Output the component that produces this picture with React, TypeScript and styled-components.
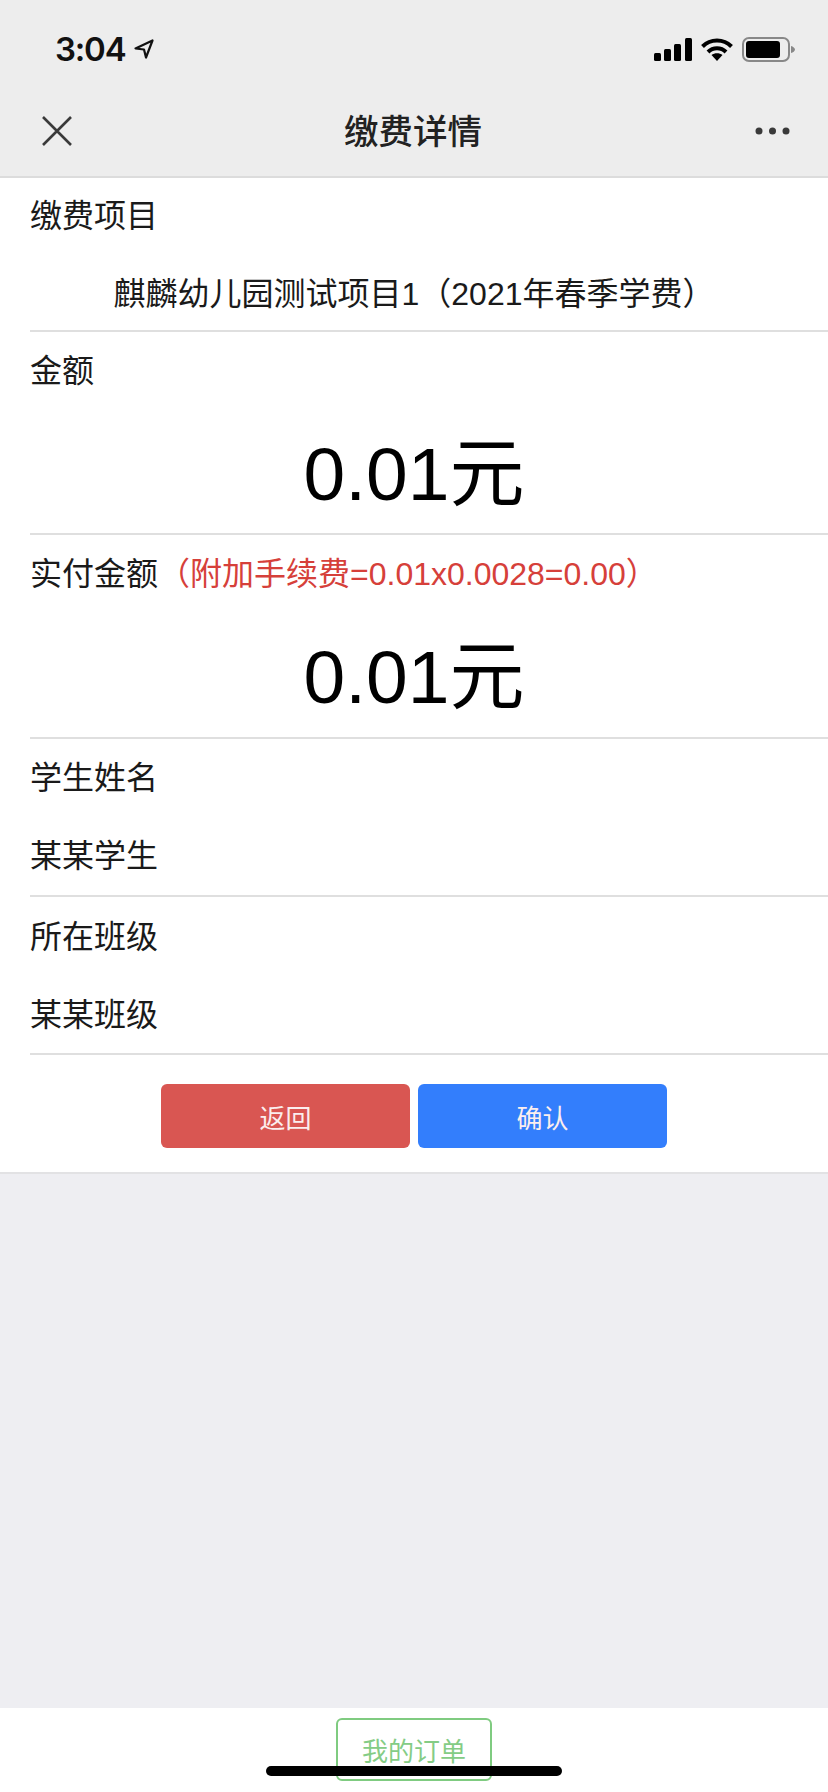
import React from "react";
import styled, { createGlobalStyle } from "styled-components";

const Global = createGlobalStyle`
  html, body { margin: 0; padding: 0; background: #eeeef2; }
  body { font-family: "Liberation Sans", "Noto Sans CJK SC", sans-serif; color: #111; }
`;
const Page = styled.div`
  position: relative; width: 828px; height: 1792px; display: flex; flex-direction: column; overflow: hidden;
`;
const TopBar = styled.header`
  background: #ededed; height: 178px; border-bottom: 2px solid #dcdcdc; box-sizing: border-box;
  display: flex; flex-direction: column; flex-shrink: 0;
`;
const StatusBar = styled.div`
  height: 88px; display: flex; align-items: center; justify-content: space-between;
  padding: 10px 33px 0 55px; box-sizing: border-box;
`;
const TimeGroup = styled.div`display: flex; align-items: center; gap: 9px;`;
const Time = styled.span`
  font-family: Inter, "Liberation Sans", sans-serif; font-size: 33px; font-weight: 600; line-height: 40px;
  letter-spacing: -1.200px; color: #111;
`;
const StatusIcons = styled.div`display: flex; align-items: center; gap: 9px;`;
const NavBar = styled.div`
  flex: 1; display: flex; align-items: center; justify-content: space-between;
  padding: 0 38px 2px 42px;
`;
const Title = styled.h1`
  margin: 2px 0 0; font-size: 34.500px; line-height: 44px; font-weight: 500; color: #222;
  font-family: "Liberation Sans", "Noto Sans CJK SC", sans-serif;
  position: absolute; left: -2px; right: 0; text-align: center; pointer-events: none;
`;
const Card = styled.main`
  background: #fff; border-bottom: 2px solid #e2e2e4; flex-shrink: 0; display: flex; flex-direction: column;
`;
const Line = styled.div<{ $h: number }>`
  height: ${(p) => p.$h}px; display: flex; align-items: center; padding-left: 30px;
  font-size: 32px; color: #1a1a1a; white-space: nowrap;
`;
const Centered = styled.div`
  height: 83px; display: flex; align-items: center; justify-content: center; font-size: 32px; color: #1a1a1a;
  white-space: nowrap; padding-top: 4px; box-sizing: border-box;
`;
const Big = styled.div<{ $h: number }>`
  height: ${(p) => p.$h}px; display: flex; align-items: center; justify-content: center;
  font-size: 75px; line-height: 1; color: #000; padding-top: 11px; box-sizing: border-box;
`;
const Red = styled.span`color: #d6403a; font-size: 32px;`;
const Divider = styled.hr`
  margin: 0 0 0 30px; border: 0; height: 2px; background: #dfdfdf;
`;
const Buttons = styled.div`
  display: flex; justify-content: center; gap: 8px; padding: 29px 0 24px;
`;
const Btn = styled.button<{ $bg: string }>`
  width: 249px; height: 64px; border: 0; border-radius: 6px; background: ${(p) => p.$bg};
  color: #fbeeee; font-size: 26px; font-family: inherit; padding: 0;
`;
const Filler = styled.div`flex: 1; background: #eeeef2;`;
const Footer = styled.footer`
  height: 84px; background: #fff; display: flex; justify-content: center; padding-top: 10px; box-sizing: border-box; flex-shrink: 0;
`;
const OrderBtn = styled.button`
  width: 156px; height: 63px; box-sizing: border-box; border: 2px solid #7fcb80; border-radius: 6px;
  background: #fff; color: #84cc85; font-size: 26px; font-family: inherit; padding: 0;
`;
const HomeBar = styled.div`
  position: absolute; left: 266px; top: 1766px; width: 296px; height: 10px; border-radius: 5px; background: #000;
`;

const Signal = () => (
  <svg width="38" height="23" viewBox="0 0 38 23">
    <rect x="0" y="15" width="7" height="8" rx="1.500" fill="#000" />
    <rect x="10" y="11" width="7" height="12" rx="1.500" fill="#000" />
    <rect x="20" y="6" width="7" height="17" rx="1.500" fill="#000" />
    <rect x="31" y="0" width="7" height="23" rx="1.500" fill="#000" />
  </svg>
);
const Wifi = () => (
  <svg width="32" height="23" viewBox="0 0 32 23" fill="none" stroke="#000" strokeWidth="4">
    <path d="M1.500 8.500C9.500 .5 22.500 .5 30.500 8.500" />
    <path d="M7 14c5-5 13-5 18 0" />
    <path d="M10.500 17l5.500 6 5.500-6c-3-2.500-8-2.500-11 0z" fill="#000" stroke="none" />
  </svg>
);
const Battery = () => (
  <svg width="53" height="25" viewBox="0 0 53 25">
    <rect x="1" y="1" width="46" height="23" rx="6" fill="none" stroke="#888" strokeWidth="2" />
    <rect x="4" y="4" width="34" height="17" rx="3" fill="#000" />
    <path d="M49 9c2 .5 4 2 4 3.500s-2 3-4 3.500z" fill="#888" />
  </svg>
);
const Arrow = () => (
  <svg width="20" height="20" viewBox="0 0 20 20" fill="none" stroke="#111" strokeWidth="2.200" strokeLinejoin="round">
    <path d="M1.500 9.500L18.500 1.500L12 18.500L10 10.500Z" />
  </svg>
);
const Close = () => (
  <svg width="30" height="30" viewBox="0 0 30 30" stroke="#3a3a3a" strokeWidth="2.600" fill="none">
    <path d="M1 1L29 29M29 1L1 29" />
  </svg>
);
const More = () => (
  <svg width="35" height="8" viewBox="0 0 35 8" fill="#3a3a3a">
    <circle cx="4" cy="4" r="3.500" />
    <circle cx="17.500" cy="4" r="3.500" />
    <circle cx="31" cy="4" r="3.500" />
  </svg>
);

export default function App() {
  return (
    <Page>
      <Global />
      <TopBar>
        <StatusBar>
          <TimeGroup>
            <Time>3:04</Time>
            <Arrow />
          </TimeGroup>
          <StatusIcons>
            <Signal />
            <Wifi />
            <Battery />
          </StatusIcons>
        </StatusBar>
        <NavBar>
          <Close />
          <Title>缴费详情</Title>
          <More />
        </NavBar>
      </TopBar>
      <Card>
        <Line $h={69}>缴费项目</Line>
        <Centered>麒麟幼儿园测试项目1（2021年春季学费）</Centered>
        <Divider />
        <Line $h={72}>金额</Line>
        <Big $h={129}>0.01元</Big>
        <Divider />
        <Line $h={72}>
          实付金额<Red>（附加手续费=0.01x0.0028=0.00）</Red>
        </Line>
        <Big $h={130}>0.01元</Big>
        <Divider />
        <Line $h={72}>学生姓名</Line>
        <Line $h={84}>某某学生</Line>
        <Divider />
        <Line $h={73}>所在班级</Line>
        <Line $h={83}>某某班级</Line>
        <Divider />
        <Buttons>
          <Btn $bg="#d95652">返回</Btn>
          <Btn $bg="#337efc">确认</Btn>
        </Buttons>
      </Card>
      <Filler />
      <Footer>
        <OrderBtn>我的订单</OrderBtn>
      </Footer>
      <HomeBar />
    </Page>
  );
}
